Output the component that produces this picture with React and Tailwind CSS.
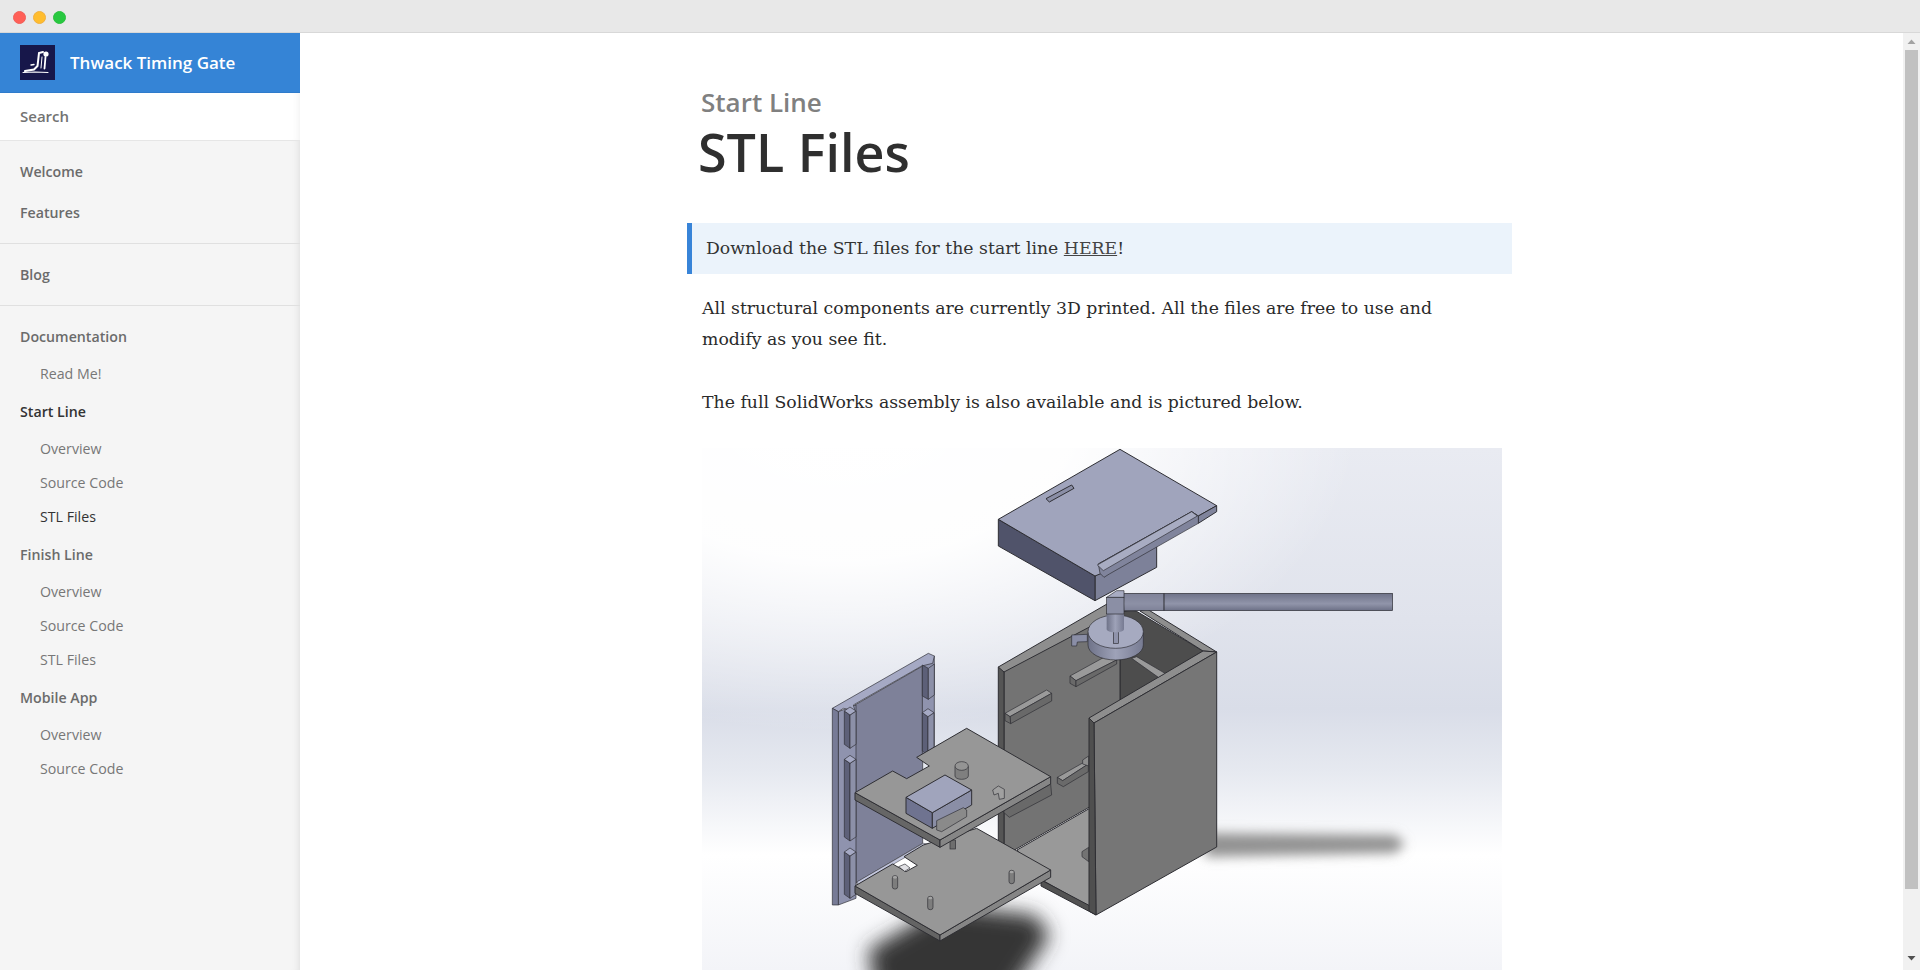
const sans = { fontFamily: '"Open Sans", sans-serif' };

function Logo() {
  return (
    <svg width="35" height="35" viewBox="0 0 35 35" className="shrink-0">
      <rect width="35" height="35" fill="#17174a" />
      <g stroke="#fff" fill="none" strokeLinecap="round">
        <path d="M3 27.5 L15 27 L28 27.5" strokeWidth="1.1" />
        <path d="M23 7 L19 8 L17.5 21 L14 24.5 L5 26" strokeWidth="2" />
        <path d="M25.5 12 L24.5 23.5" strokeWidth="1.8" />
        <path d="M22 12 L21 23" strokeWidth="1" />
        <path d="M11 20 L14 19.5" strokeWidth="1.4" />
      </g>
      <circle cx="26" cy="9" r="2.6" fill="#fff" />
    </svg>
  );
}

function Top({ children, active }) {
  return <div className={`text-[14.2px] font-semibold leading-[20px] pl-[20px] ${active ? "text-[#333]" : "text-[#6b6b6b]"}`}>{children}</div>;
}
function Sub({ children, active }) {
  return <div className={`text-[14.2px] leading-[20px] pl-[40px] h-[34px] pt-[7px] ${active ? "text-[#333]" : "text-[#777]"}`}>{children}</div>;
}
function Section({ title, active, items, activeItem }) {
  return (
    <div className="pt-[11px]">
      <Top active={active}>{title}</Top>
      <div className="pt-[10px]">
        {items.map((t) => (
          <Sub key={t} active={t === activeItem}>{t}</Sub>
        ))}
      </div>
    </div>
  );
}

function Sidebar() {
  return (
    <aside className="w-[300px] shrink-0 flex flex-col h-full" style={sans}>
      <div className="h-[60px] bg-[#3584d6] flex items-center pl-[20px] gap-[15px] border-b border-[#2f7bcb]">
        <Logo />
        <span className="text-white font-semibold text-[17px]">Thwack Timing Gate</span>
      </div>
      <div className="h-[47px] bg-white flex items-center pl-[20px] text-[15px] font-semibold text-[#737373] shadow-[inset_-8px_0_8px_-8px_rgba(0,0,0,0.08)]">Search</div>
      <nav className="flex-1 bg-[#f5f5f5] border-t border-[#e6e6e6] shadow-[inset_-8px_0_8px_-8px_rgba(0,0,0,0.12)]">
        <div className="pt-[21px] pb-[20px] border-b border-[#e0e0e0] flex flex-col gap-[21px]">
          <Top>Welcome</Top>
          <Top>Features</Top>
        </div>
        <div className="pt-[21px] pb-[20px] border-b border-[#e0e0e0]">
          <Top>Blog</Top>
        </div>
        <div className="pt-[10px]">
          <Section title="Documentation" items={["Read Me!"]} />
          <Section title="Start Line" active items={["Overview", "Source Code", "STL Files"]} activeItem="STL Files" />
          <Section title="Finish Line" items={["Overview", "Source Code", "STL Files"]} />
          <Section title="Mobile App" items={["Overview", "Source Code"]} />
        </div>
      </nav>
    </aside>
  );
}

const E = "#2e2e33";
function P({ c, p, s = 3 }) {
  return <polygon fill={c} points={p} stroke={E} strokeWidth={s} strokeLinejoin="round" />;
}
function Rib9({ x, y1, y2 }) {
  return (
    <g>
      <P c="#5d6078" p={`${x},${y1 + 8} ${x + 17},${y1 + 20} ${x + 17},${y2} ${x},${y2 - 12}`} s={2} />
      <P c="#8c90a8" p={`${x + 17},${y1 + 20} ${x + 35},${y1 + 8} ${x + 35},${y2 - 12} ${x + 17},${y2}`} s={2} />
      <P c="#a5a9c4" p={`${x},${y1 + 8} ${x + 17},${y1 - 4} ${x + 35},${y1 + 8} ${x + 17},${y1 + 20}`} s={2} />
    </g>
  );
}
function Pin({ x, y }) {
  return (
    <g>
      <rect x={x - 8} y={y - 20} width="16" height="40" rx="7" fill="#7d7d7d" stroke={E} strokeWidth="2" />
      <ellipse cx={x} cy={y - 15} rx="6" ry="4" fill="#a5a5a5" />
    </g>
  );
}

function Assembly() {
  return (
    <svg viewBox="702 448 800 522" width="800" height="522" className="block">
      <defs>
        <linearGradient id="bg" x1="0" y1="0" x2="0" y2="1">
          <stop offset="0" stopColor="#e9ebf2" />
          <stop offset="0.33" stopColor="#e0e3ec" />
          <stop offset="0.5" stopColor="#d9dde8" />
          <stop offset="0.62" stopColor="#e6e9f0" />
          <stop offset="0.78" stopColor="#ffffff" />
          <stop offset="1" stopColor="#f3f4f8" />
        </linearGradient>
        <radialGradient id="tl" gradientUnits="userSpaceOnUse" cx="840" cy="420" r="520" gradientTransform="translate(840 420) scale(1 0.6) translate(-840 -420)">
          <stop offset="0" stopColor="#fff" />
          <stop offset="0.45" stopColor="#fff" stopOpacity="0.95" />
          <stop offset="1" stopColor="#fff" stopOpacity="0" />
        </radialGradient>
        <linearGradient id="rod" x1="0" y1="0" x2="0" y2="1">
          <stop offset="0" stopColor="#6e7288" />
          <stop offset="0.6" stopColor="#9195aa" />
          <stop offset="1" stopColor="#6c7086" />
        </linearGradient>
        <linearGradient id="cyl" x1="0" y1="0" x2="1" y2="0">
          <stop offset="0" stopColor="#6f7389" />
          <stop offset="0.5" stopColor="#9ea2b8" />
          <stop offset="1" stopColor="#777b92" />
        </linearGradient>
        <filter id="b1" x="-30%" y="-80%" width="160%" height="260%"><feGaussianBlur stdDeviation="6" /></filter>
        <filter id="b2" x="-30%" y="-30%" width="160%" height="160%"><feGaussianBlur stdDeviation="10" /></filter>
      </defs>
      <rect x="702" y="448" width="800" height="522" fill="url(#bg)" />
      <rect x="702" y="448" width="800" height="522" fill="url(#tl)" />
      {/* shadows */}
      <polygon points="1205,833 1395,835 1405,844 1395,853 1205,857" fill="#929292" filter="url(#b1)" />
      <polygon points="868,950 945,905 1035,915 1050,935 1000,1010 880,1010" fill="#353535" filter="url(#b2)" />

      {/* box interior (page coordinates) */}
      <polygon fill="#4d4d4d" stroke={E} points="1110,612 1136,611 1203,651 1120,702 1120,660" />
      <polygon fill="#737373" stroke={E} points="1004,670 1110,610 1120,660 1120,702 1093,718 1093,805 1004,856" />
      <polygon fill="#999999" stroke={E} points="1017,850 1092,807 1092,908 1042,880" />
      <polygon fill="#525252" stroke={E} points="1041,880 1094,908 1096,915 1041,886" />
      <polygon fill="#555555" stroke={E} points="998.3,667 1004,670 1004,856 998.3,852" />
      {/* rims */}
      <polygon fill="#8e8e8e" stroke={E} points="998.3,667 1107,604 1118,612 1004,672" />
      <polygon fill="#8e8e8e" stroke={E} points="1140,611 1147,609 1216.7,652 1203,651" />
      <polygon fill="#8e8e8e" stroke={E} points="1203,651 1216.7,652 1094,723 1089,718" />
      {/* back dividers and ribs */}
      <g transform="translate(950 440) scale(0.33333)">
        <polygon fill="#9a9a9a" stroke={E} strokeWidth="2" points="545,655 560,650 645,700 625,712" />
        <P c="#9a9a9a" p="360,708 480,642 500,660 378,722" s={2} />
        <P c="#696969" p="360,708 378,722 378,740 360,730" s={2} />
        <P c="#696969" p="378,722 500,660 500,672 378,740" s={2} />
        <P c="#9a9a9a" p="165,820 290,750 305,760 180,830" s={2} />
        <P c="#696969" p="180,830 305,760 305,783 182,851" s={2} />
        <P c="#696969" p="165,820 180,830 182,851 165,842" s={2} />
      </g>
      <g transform="translate(800 640) scale(0.33333)">
        <P c="#9a9a9a" p="772,412 855,365 865,372 788,422" s={2} />
        <P c="#6a6a6a" p="788,422 865,372 865,395 790,440 772,430 772,412" s={2} />
        <P c="#696969" p="612,505 752,432 755,465 628,532 612,518" s={2} />
        <polygon fill="#737373" stroke={E} strokeWidth="2" points="846,635 866,622 866,665 846,650" />
        <polygon fill="#8e8e8e" stroke={E} strokeWidth="2" points="848,360 866,348 866,378 848,372" />
      </g>

      {/* front panel */}
      <polygon fill="#767676" stroke={E} points="1094,723 1216.7,652 1216.7,847 1096,915" />
      <polygon fill="#4f4f4f" stroke={E} points="1089,718 1094,723 1096,915 1089,911" />

      {/* lid */}
      <g transform="translate(950 440) scale(0.33333)">
        <P c="#7d8199" p="435,408 620,300 620,382 435,482" />
        <P c="#50536a" p="145,238 435,408 435,482 145,318" />
        <P c="#a0a4bc" p="145,238 510,28 800,197 745,228 725,215 445,372 455,400 435,408" />
        <P c="#80849c" p="745,228 800,197 800,215 745,250" />
        <P c="#80849c" p="445,372 725,215 745,228 745,250 478,402 462,412 450,400" s={2} />
        <P c="#a8acc2" p="442,375 725,215 742,228 460,392" s={2} />
        <P c="#8a8ea6" p="288,176 365,135 372,145 298,186" />

        {/* rod */}
        <rect x="520" y="460" width="808" height="52" fill="url(#rod)" stroke={E} strokeWidth="2" />
        <rect x="525" y="462" width="115" height="48" fill="#8a8ea3" opacity="0.6" />
        <line x1="642" y1="460" x2="642" y2="512" stroke={E} strokeWidth="3" />

        {/* disk */}
        <path d="M414 578 L414 615 A83 45 0 0 0 580 615 L580 578 Z" fill="url(#cyl)" stroke={E} strokeWidth="2" />
        <ellipse cx="497" cy="575" rx="83" ry="50" fill="#a6aac0" stroke={E} strokeWidth="2" />
        <P c="#8a8ea6" p="365,585 412,583 412,605 382,606 380,618 365,618" s={2} />
        <rect x="490" y="575" width="15" height="35" fill="#8f93ab" stroke={E} strokeWidth="2" />
        {/* post */}
        <rect x="470" y="520" width="52" height="48" fill="url(#cyl)" />
        <ellipse cx="496" cy="568" rx="26" ry="9" fill="url(#cyl)" />
        <P c="#a8acc2" p="470,472 500,452 522,452 522,472" s={2} />
        <rect x="470" y="472" width="52" height="50" fill="#8b8fa5" stroke={E} strokeWidth="2" />
      </g>

      {/* left panel */}
      <g transform="translate(800 640) scale(0.33333)">
        <P c="#7e8199" p="165,195 368,78 368,610 165,730" s={2} />
        <P c="#8f93ae" p="115,215 168,195 168,775 115,795" s={2} />
        <P c="#8f93ae" p="367,72 403,48 403,340 367,352" s={2} />
        <P c="#a5a9c4" p="97,205 385,40 403,48 398,70 365,78 160,195 165,212 130,205 115,215" s={2} />
        <P c="#777b96" p="97,205 115,215 115,795 97,795" s={2} />
        <Rib9 x={133} y1={205} y2={325} />
        <Rib9 x={133} y1={350} y2={603} />
        <Rib9 x={133} y1={628} y2={775} />
        <P c="#5d6078" p="367,75 385,85 385,178 367,168" s={2} />
        <P c="#8c90a8" p="385,85 403,72 403,165 385,178" s={2} />
        <Rib9 x={367} y1={210} y2={345} />
        <polygon fill="#c3c7de" stroke={E} strokeWidth="1.5" points="172,725 370,610 385,612 172,735" />

        {/* lower plate */}
        <P c="#646464" p="165,738 420,885 420,903 165,760" />
        <P c="#858585" p="420,885 752,690 752,712 420,903" />
        <P c="#979797" p="530,565 752,690 420,885 165,738 278,672 318,695 352,676 312,650 370,615" />
        <polygon fill="#e0e0e4" stroke={E} strokeWidth="2" points="296,680 315,672 330,684 314,694" />
        <Pin x={285} y={727} />
        <Pin x={391} y={789} />
        <Pin x={635} y={711} />
        <rect x="450" y="600" width="17" height="27" fill="#6d6d6d" stroke={E} strokeWidth="2" />

        {/* upper plate */}
        <P c="#666666" p="165,458 420,600 420,622 165,480" />
        <P c="#868686" p="420,600 752,410 752,432 420,622" />
        <P c="#979797" p="500,265 752,410 420,600 165,458 278,393 320,416 388,378 350,352" />
        <path d="M465 380 L465 408 A20 10 0 0 0 505 408 L505 380 Z" fill="#7f7f7f" stroke={E} strokeWidth="2" />
        <ellipse cx="485" cy="378" rx="20" ry="13" fill="#949494" stroke={E} strokeWidth="2" />
        <P c="#6f7390" p="318,472 397,518 397,565 318,520" />
        <P c="#8a8ea6" p="397,518 515,450 515,495 397,565" />
        <P c="#a0a4bc" p="318,472 435,405 515,450 397,518" />
        <P c="#8a8a8a" p="410,542 490,503 500,510 500,530 425,575 410,570" s={2} />
        <P c="#a0a0a0" p="578,450 595,438 613,448 613,475 598,478 595,460 582,465" s={2} />
      </g>
    </svg>
  );
}

function Main() {
  return (
    <main className="flex-1 min-w-0 overflow-hidden bg-white">
      <div className="w-[825px] ml-[387px]">
        <header className="pl-[14px] pt-[51px]" style={sans}>
          <div className="text-[26px] font-semibold leading-[36px] text-[#808080]">Start Line</div>
          <h1 className="text-[52px] font-semibold leading-[64px] text-[#2f2f2f] -ml-[3px]">STL Files</h1>
        </header>
        <div className="mt-[39px] h-[51px] bg-[#ebf3fb] border-l-[5px] border-[#3884d8] pl-[14px] flex items-center font-['DejaVu_Serif',serif] text-[17.3px] text-[#333]">
          <span>Download the STL files for the start line <a className="underline text-[#444]">HERE</a>!</span>
        </div>
        <div className="pl-[15px] pr-[50px] mt-[19px] font-['DejaVu_Serif',serif] text-[17.3px] leading-[31px] text-[#2a2a2a]">
          <p>All structural components are currently 3D printed. All the files are free to use and modify as you see fit.</p>
          <p className="mt-[32px]">The full SolidWorks assembly is also available and is pictured below.</p>
        </div>
        <div className="pl-[15px] mt-[30px]">
          <Assembly />
        </div>
      </div>
    </main>
  );
}

function Scrollbar() {
  return (
    <div className="w-[17px] shrink-0 h-full bg-[#f1f1f1] flex flex-col items-center">
      <svg width="17" height="17" viewBox="0 0 17 17" className="shrink-0"><polygon points="4.5,11 12.5,11 8.5,6.5" fill="#a3a3a3" /></svg>
      <div className="w-[13px] h-[839px] bg-[#c1c1c1] shrink-0" />
      <div className="flex-1" />
      <svg width="17" height="17" viewBox="0 0 17 17" className="shrink-0 mb-[3px]"><polygon points="4.5,6 12.5,6 8.5,10.5" fill="#505050" /></svg>
    </div>
  );
}

export default function App() {
  return (
    <div className="w-[1920px] h-[970px] flex flex-col overflow-hidden bg-white">
      <div className="h-[33px] shrink-0 bg-[#e8e8e8] border-b border-[#d8d8d8] flex items-center pl-[13px] gap-[7px] pt-[2px]">
        <span className="w-[13px] h-[13px] rounded-full bg-[#ff5f57] border border-[#f0605a]" />
        <span className="w-[13px] h-[13px] rounded-full bg-[#ffbd2e] border border-[#f0b040]" />
        <span className="w-[13px] h-[13px] rounded-full bg-[#28c840] border border-[#2bc03f]" />
      </div>
      <div className="flex-1 min-h-0 flex">
        <Sidebar />
        <Main />
        <Scrollbar />
      </div>
    </div>
  );
}
